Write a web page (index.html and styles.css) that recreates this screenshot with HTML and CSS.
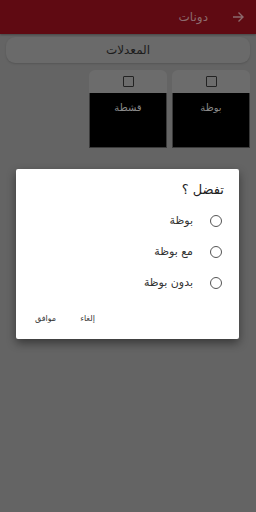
FILE: index.html
```html
<!DOCTYPE html>
<html lang="ar" dir="rtl">
<head>
<meta charset="utf-8">
<link rel="stylesheet" href="styles.css">
</head>
<body>
<div class="page">
  <header class="appbar">
    <svg class="back" width="12" height="12" viewBox="0 0 12 12"><path d="M1 6h10M6.5 1.5L11 6l-4.5 4.5" fill="none" stroke="#8c6a6d" stroke-width="1.4"/></svg>
    <span class="title">دونات</span>
  </header>
  <div class="section">المعدلات</div>
  <div class="tiles">
    <div class="tile">
      <div class="tile-top"><span class="check"></span></div>
      <div class="tile-body">بوظة</div>
    </div>
    <div class="tile">
      <div class="tile-top"><span class="check"></span></div>
      <div class="tile-body">قشطة</div>
    </div>
  </div>
</div>
<div class="dialog">
  <div class="dlg-title">تفضل ؟</div>
  <div class="options">
    <div class="opt"><span class="radio"></span><span>بوظة</span></div>
    <div class="opt"><span class="radio"></span><span>مع بوظة</span></div>
    <div class="opt"><span class="radio"></span><span>بدون بوظة</span></div>
  </div>
  <div class="actions">
    <span class="btn">إلغاء</span>
    <span class="btn">موافق</span>
  </div>
</div>
</body>
</html>
```
FILE: styles.css
```css
html, body {
  margin: 0;
  padding: 0;
}
body {
  width: 256px;
  height: 512px;
  background: #646464;
  font-family: "DejaVu Sans", sans-serif;
  overflow: hidden;
  position: relative;
}
.page {
  display: flex;
  flex-direction: column;
}
.appbar {
  height: 34px;
  background: #5f0a12;
  display: flex;
  align-items: center;
  padding-right: 12px;
  gap: 24px;
  box-shadow: 0 1px 2px rgba(0,0,0,0.3);
}
.back {
  display: block;
}
.title {
  color: #8c6a6d;
  font-size: 12px;
}
.section {
  margin: 3px 6px 0;
  height: 26px;
  background: #6a6a6a;
  border-radius: 9px;
  display: flex;
  align-items: center;
  justify-content: center;
  color: #1c1c1c;
  font-size: 12px;
  box-shadow: 0 1px 2px rgba(0,0,0,0.15);
}
.tiles {
  margin-top: 7px;
  padding: 0 6px;
  display: grid;
  grid-template-columns: repeat(3, 1fr);
  gap: 5px;
}
.tile {
  display: flex;
  flex-direction: column;
}
.tile-top {
  height: 23px;
  background: #6c6c6c;
  border-radius: 6px 6px 0 0;
  display: flex;
  align-items: center;
  justify-content: center;
}
.check {
  width: 9px;
  height: 9px;
  border: 1.5px solid #222;
  border-radius: 1px;
}
.tile-body {
  height: 55px;
  background: #000;
  color: #8a8a8a;
  font-size: 10px;
  text-align: center;
  padding-top: 9px;
  box-sizing: border-box;
  border: 1px solid #3a3a3a;
  border-top: none;
}
.dialog {
  position: absolute;
  left: 16px;
  top: 169px;
  width: 223px;
  height: 170px;
  background: #fff;
  box-shadow: 0 4px 10px rgba(0,0,0,0.45);
  border-radius: 2px;
  box-sizing: border-box;
  padding: 13px 15px 0 0;
  display: flex;
  flex-direction: column;
  color: #222;
}
.dlg-title {
  font-size: 13px;
  line-height: 16px;
}
.options {
  display: flex;
  flex-direction: column;
  gap: 17px;
  margin-top: 16px;
  padding-right: 2px;
}
.opt {
  display: flex;
  align-items: center;
  gap: 17px;
  font-size: 11px;
  line-height: 14px;
  color: #333;
}
.radio {
  width: 10px;
  height: 10px;
  border: 1.5px solid #555;
  border-radius: 50%;
}
.actions {
  margin-top: auto;
  margin-bottom: 16px;
  display: flex;
  justify-content: flex-end;
  gap: 24px;
  padding-left: 19px;
}
.btn {
  font-size: 8px;
  color: #333;
}
```
